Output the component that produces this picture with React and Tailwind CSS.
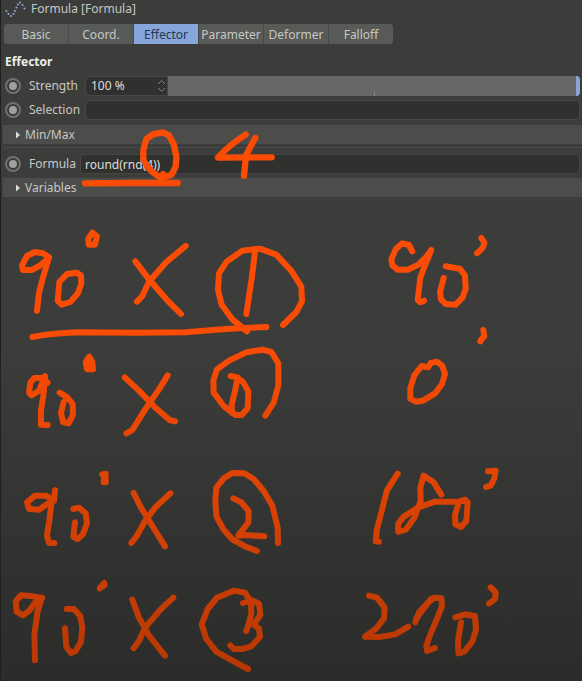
import React from "react";

const tabs = ["Basic", "Coord.", "Effector", "Parameter", "Deformer", "Falloff"];

// Pen strokes, grouped by the part of the canvas they were drawn on.
const strokes = [
  {
    x: 0,
    y: 95,
    width: 19,
    paths: [
      "M258 265 L388 264 L536 264",
      "M486 248 Q462 236 446 216 L433 194 L433 165 L442 132 L462 118 L490 112 L510 121 L525 150 L532 185 L530 215 L518 239 L498 245 L492 237",
      "M740 119 Q690 150 657 188 L818 187",
      "M769 129 Q752 158 741 182 L735 242",
    ],
  },
  {
    x: 0,
    y: 210,
    width: 18,
    paths: [
      "M150 142 L132 130 L108 126 L84 138 L69 166 L72 180 L98 180 L124 166 L150 143 L132 202 L120 248 L114 302",
      "M246 196 L232 188 L204 192 L181 216 L176 272 L188 284 L214 276 L237 250 L247 220 Z",
      "M280 68 L268 86 L269 104 L288 104 L294 79 Z",
      "M409 154 L450 208 L502 268 L546 312",
      "M560 108 L502 156 L450 215 L430 258 L414 275",
      "M768 126 L758 206 L742 312",
      "M852 345 L892 306 L909 274 L907 230 L878 184 L832 134 L782 116 L730 122 L683 155 L660 190 L657 240 L668 284 L700 328 L744 364",
      "M100 381 Q150 371 238 367 L410 368 L560 367 L680 357 L802 351",
    ],
  },
  {
    x: 350,
    y: 220,
    width: 18,
    paths: [
      "M190 94 L180 75 L160 70 L140 88 L127 118 L130 136 L146 149 L176 149 L208 134 L230 112 L247 90 L232 126 L214 172 L206 240 L214 247 L225 242",
      "M284 174 L273 216 L276 238 L290 252 L320 254 L341 232 L350 206 L348 166 L332 146 L290 139",
      "M397 54 L406 68 L403 80 L395 90 L384 100",
      "M403 330 L406 348 L396 360 L394 364",
      "M237 442 L218 438 L196 466 L184 504 L184 536 L200 545 L222 542 L258 520 L279 492 L288 462 L280 438 L264 425 L245 429 L238 441",
    ],
  },
  {
    x: 0,
    y: 330,
    width: 18,
    paths: [
      "M146 158 L128 144 L106 144 L94 158 L90 188 L98 196 L120 182 L138 138 L134 190 L126 242 L126 284 L146 285",
      "M182 188 L205 202 L221 222 L222 254 L209 280 L192 276 L186 248 L194 216",
      "M271 80 L260 96 L264 118 L282 118 L280 97 Z M271 96 L271 110",
      "M377 142 L422 184 L470 234 L512 270 L528 274",
      "M506 136 L480 178 L440 236 L400 300 L382 310",
      "M695 138 L716 142 L708 184 L698 224 L699 248",
      "M799 257 L824 218 L838 166 L838 100 L817 66 L790 59 L742 67 L690 92 L654 118 L643 152 L644 188 L674 228 L710 255 L728 255 L746 235 L748 184 L732 156 L716 145",
    ],
  },
  {
    x: 0,
    y: 455,
    width: 18,
    paths: [
      "M168 106 L165 137 L142 122 L108 122 L84 142 L90 162 L120 164 L158 138 L151 196 L144 242 L150 264 L166 264",
      "M223 162 L240 158 L260 175 L264 204 L252 238 L236 252 L223 245 L228 202",
      "M310 58 L320 56 L320 82 L314 82 L315 68",
      "M404 114 L426 158 L462 216 L498 274",
      "M514 115 L468 158 L438 198 L414 242 L397 264",
      "M703 130 L727 142 L749 168 L748 202 L718 242 L738 240 L796 244",
      "M837 264 L836 218 L820 152 L794 108 L764 72 L736 55 L700 54 L674 70 L652 98 L649 138 L652 184 L674 224 L700 253 L738 274 L774 288",
    ],
  },
  {
    x: 340,
    y: 455,
    width: 18,
    paths: [
      "M176 56 L144 106 L128 168 L114 222 L110 259 L120 260",
      "M307 119 L284 82 L254 62 L244 98 L245 138 L226 188 L200 224 L178 230 L177 207 L194 185 L236 158 L288 140 L352 140",
      "M378 134 L360 140 L348 180 L349 208 L366 216 L382 198 L386 142 Z",
      "M447 49 L470 47 L466 70 L456 91 L441 96",
    ],
  },
  {
    x: 0,
    y: 565,
    width: 18,
    paths: [
      "M130 99 L102 94 L66 91 L50 109 L53 140 L72 151 L92 136 L112 108 L129 98 L116 138 L106 208 L108 286",
      "M203 132 L225 132 L244 154 L250 190 L246 230 L230 258 L216 264 L202 246 L198 190",
      "M302 70 L316 54 L316 61 Z",
      "M400 104 L420 158 L450 212 L498 272",
      "M523 98 L484 134 L438 188 L420 228 L404 250",
      "M747 312 L700 287 L652 260 L622 222 L608 178 L626 132 L654 98 L704 77 L738 83 L756 112 L757 146 L748 180 L742 198",
      "M732 114 L758 106 L780 116 L784 150 L764 178 L780 191 L783 216 L757 244 L730 252 L705 252 L694 241",
    ],
  },
  {
    x: 340,
    y: 565,
    width: 18,
    paths: [
      "M90 92 L114 98 L137 128 L135 160 L112 190 L78 215 L122 216 L168 208 L208 185",
      "M229 172 L240 142 L268 112 L286 98 L307 100 L309 124 L292 166 L274 208 L262 242 L264 258 L288 249",
      "M232 160 L276 102",
      "M349 157 L378 148 L408 153 L411 194 L400 230 L376 260 L358 265 L357 228 L366 172",
      "M455 67 L470 82 L468 102 L450 116",
    ],
  },
];

function PenMarks() {
  return (
    <svg
      className="pointer-events-none absolute top-0 left-0"
      width="582"
      height="681"
      viewBox="2 0 582 681"
      fill="none"
      stroke="#fa4c05"
      strokeLinecap="round"
      strokeLinejoin="round"
      aria-hidden="true"
    >
      {strokes.map((group, i) => (
        <g
          key={i}
          transform={`translate(${group.x} ${group.y}) scale(0.33333)`}
          strokeWidth={group.width}
        >
          {group.paths.map((d) => (
            <path key={d} d={d} />
          ))}
        </g>
      ))}
    </svg>
  );
}

function FormulaIcon() {
  return (
    <svg width="22" height="18" viewBox="0 0 22 18" aria-hidden="true" fill="#8f9fdc">
      <circle cx="1.5" cy="11" r="1.1" />
      <circle cx="3.5" cy="14" r="1.1" />
      <circle cx="6" cy="16" r="1.1" />
      <circle cx="8.5" cy="14" r="1.1" />
      <circle cx="10" cy="11" r="1.1" />
      <circle cx="11.5" cy="7.5" r="1.1" />
      <circle cx="13" cy="4.5" r="1.1" />
      <circle cx="15" cy="2.5" r="1.1" />
      <circle cx="17.5" cy="5" r="1.1" />
      <circle cx="19.5" cy="8.5" r="1.1" />
    </svg>
  );
}

function KeyDot({ label }) {
  return (
    <button
      type="button"
      aria-label={label}
      className="flex size-4 shrink-0 items-center justify-center rounded-full border-2 border-[#70716e] bg-[#3a3b39]"
    >
      <span className="size-2 rounded-full bg-[#a0a19e]" />
    </button>
  );
}

function Section({ children }) {
  return (
    <button
      type="button"
      className="flex h-[19px] w-full items-center gap-1 bg-[#4c4d4a] pl-3 text-left"
    >
      <svg width="6" height="8" viewBox="0 0 6 8" aria-hidden="true">
        <path d="M1 0.5 L5 4 L1 7.5 Z" fill="#dededc" />
      </svg>
      {children}
    </button>
  );
}

const field = "h-5 min-w-0 flex-1 rounded-sm border border-[#474845] bg-[#30312f] outline-none";

export default function App() {
  return (
    <main className="relative min-h-screen overflow-hidden border-l border-[#20211f] bg-[#3c3d3a] font-['Noto_Sans',sans-serif] text-[12px] leading-4 text-[#c6c7c4]">
      <header className="flex h-6 items-start gap-1 pl-1">
        <FormulaIcon />
        <h1 className="pt-px">Formula [Formula]</h1>
      </header>

      <nav className="flex pl-[3px]" aria-label="Sections">
        <div className="flex gap-px overflow-hidden rounded-sm bg-[#484946]">
          {tabs.map((tab) => (
            <button
              key={tab}
              type="button"
              aria-pressed={tab === "Effector"}
              className={
                tab === "Effector"
                  ? "h-5 w-16 bg-[#86a6dc] pt-px text-[#28374f]"
                  : "h-5 w-16 bg-[#585a57] pt-px"
              }
            >
              {tab}
            </button>
          ))}
        </div>
      </nav>

      <h2 className="mt-[10px] pl-1 font-bold text-[#eeeeec]">Effector</h2>

      <div className="mt-[6px] flex flex-col gap-1 pr-[2px] pl-1">
        <div className="flex h-5 items-center">
          <KeyDot label="Animate strength" />
          <label htmlFor="strength" className="w-16 shrink-0 pl-2">Strength</label>
          <div className="flex h-5 w-[83px] shrink-0 items-center rounded-l-sm border border-[#474845] bg-[#30312f] pr-px pl-1">
            <input
              id="strength"
              defaultValue="100 %"
              className="min-w-0 flex-1 bg-transparent pl-px text-[#dededc] outline-none"
            />
            <svg width="9" height="14" viewBox="0 0 9 14" fill="none" stroke="#858683" aria-hidden="true">
              <path d="M1 5 L4.5 1.5 L8 5 M1 9 L4.5 12.5 L8 9" />
            </svg>
          </div>
          <div className="relative h-5 flex-1 rounded-r-sm bg-[#656764]">
            <input
              type="range"
              aria-label="Strength slider"
              min="0"
              max="100"
              defaultValue="100"
              className="block h-5 w-full appearance-none rounded-r-sm bg-transparent [&::-webkit-slider-thumb]:h-5 [&::-webkit-slider-thumb]:w-1 [&::-webkit-slider-thumb]:appearance-none [&::-webkit-slider-thumb]:rounded-r-sm [&::-webkit-slider-thumb]:bg-[#8ca4d4]"
            />
            <span className="absolute bottom-0 left-1/2 h-1 w-px bg-[#858783]" />
          </div>
        </div>
        <div className="flex h-5 items-center">
          <KeyDot label="Animate selection" />
          <label htmlFor="selection" className="w-16 shrink-0 pl-2">Selection</label>
          <input id="selection" className={field} />
        </div>
      </div>

      <div className="mt-[5px] pl-[2px]">
        <Section>Min/Max</Section>
        <hr className="mt-[3px] border-[#4b4c49]" />
      </div>

      <div className="mt-[6px] flex h-5 items-center pr-[2px] pl-1">
        <KeyDot label="Animate formula" />
        <label htmlFor="formula" className="w-[59px] shrink-0 pl-2">Formula</label>
        <input
          id="formula"
          defaultValue="round(rnd(4))"
          className={`${field} pl-1 text-[#dededc]`}
        />
      </div>

      <div className="mt-1 pl-[2px]">
        <Section>Variables</Section>
      </div>

      <PenMarks />
      <div className="pointer-events-none absolute inset-0 bg-linear-to-b from-black/0 from-50% to-black/28" />
    </main>
  );
}
